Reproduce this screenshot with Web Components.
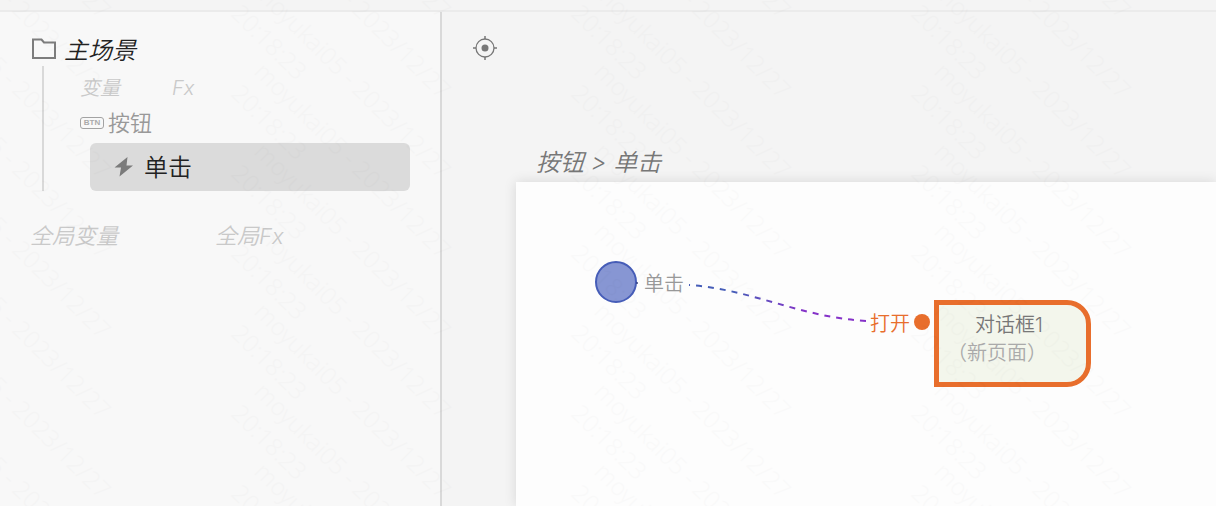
<!DOCTYPE html>
<html lang="zh-CN">
<head>
<meta charset="utf-8">
<title>主场景</title>
<style>
  html, body { height: 100%; }
  body {
    margin: 0;
    overflow: hidden;
    background: #f4f4f4;
    color: #222;
    font-family: Inter, "Noto Sans CJK SC", sans-serif;
  }
</style>
</head>
<body>
<flow-editor>
  <scene-panel slot="side">
    <tree-item slot="item"></tree-item>
  </scene-panel>
  <flow-canvas slot="main" heading="按钮 &gt; 单击"></flow-canvas>
</flow-editor>

<script>
const define = (name, html, setup) => customElements.define(name, class extends HTMLElement {
  constructor() {
    super();
    const template = document.createElement('template');
    template.innerHTML = html;
    this.attachShadow({ mode: 'open' }).append(template.content.cloneNode(true));
  }
  connectedCallback() { if (setup) setup(this, this.shadowRoot); }
});

const FONT = 'Inter, "Noto Sans CJK SC", sans-serif';
const BUTTON = `button { margin: 0; padding: 0; border: 0; background: none; color: inherit; font: inherit; text-align: left; white-space: nowrap; cursor: pointer; }`;

/* Repeating diagonal user / time stamp laid over the whole editor */
define('user-watermark', `
<style>
  :host { position: absolute; inset: 0; z-index: 1; overflow: hidden; pointer-events: none; }
  svg { display: block; width: 100%; height: 100%; opacity: .01; }
  text { font: 300 24px "Noto Sans", sans-serif; fill: #000; }
</style>
<svg aria-hidden="true"></svg>`, (host, root) => {
  const svg = root.querySelector('svg');
  const stamp = (x, y, value, reach) => {
    if (x + reach < 0 || y + reach < 0) return;
    const node = document.createElementNS('http://www.w3.org/2000/svg', 'text');
    node.setAttribute('transform', 'translate(' + x + ' ' + y + ') rotate(45)');
    node.textContent = value;
    svg.append(node);
  };
  for (let x = -87; x < innerWidth; x += 340) {
    for (let y = -167; y < innerHeight; y += 80) {
      stamp(x, y, 'moyukai05 - 2023/12/27', 200);
      stamp(x - 23, y + 22, '20:18:23', 70);
    }
  }
});

define('flow-editor', `
<style>
  :host { position: relative; display: flex; flex-direction: column; height: 100vh; overflow: hidden; }
  header { flex: none; height: 10px; border-bottom: 2px solid #ebebeb; background: #f4f4f4; }
  .body { flex: 1; min-height: 0; display: grid; grid-template-columns: 440px minmax(0, 1fr); }
  aside { border-right: 2px solid #d9d9d9; background: #f8f8f8; width: 100%; }
  main { display: flex; min-width: 0; padding-left: 2px; background: #f4f4f4; background-clip: content-box; }
</style>
<header></header>
<div class="body">
  <aside><slot name="side"></slot></aside>
  <main><slot name="main"></slot></main>
</div>
<user-watermark></user-watermark>`);

define('tree-item', `
<style>
  :host { display: block; }
  ${BUTTON}
  button { display: flex; align-items: center; gap: 11px; box-sizing: border-box; width: 100%; height: 48px; padding-left: 24px; border-radius: 6px; background: #dbdbdb; font-size: 24px; line-height: 32px; color: #222; }
  svg { display: block; flex: none; }
  span { padding-top: 2px; }
</style>
<button type="button" aria-current="true">
  <svg width="19" height="20" viewBox="0 0 19 20" aria-hidden="true"><path d="M13.500 0 .5 10.500H7L5.500 19.500 19 8.500H12.500Z" fill="#7b7b7b"/></svg>
  <span>单击</span>
</button>`);

define('scene-panel', `
<style>
  :host { display: block; padding: 20px 30px 0; font-family: ${FONT}; font-weight: 350; }
  ${BUTTON}
  svg { display: block; flex: none; }
  .scene { display: flex; align-items: center; gap: 6px; height: 34px; font-size: 24px; line-height: 32px; font-style: italic; color: #222; }
  .scene span { padding-top: 4px; }
  .tree { margin-left: 12px; padding-left: 36px; border-left: 2px solid #d9d9d9; display: grid; grid-template-rows: 42px 35px 48px; }
  .vars { display: grid; grid-template-columns: 92px auto; justify-content: start; align-items: center; padding-top: 2px; font-size: 20px; line-height: 28px; font-style: italic; color: #c9c9c9; }
  .widget { display: flex; align-items: center; gap: 4px; height: 30px; font-size: 22px; line-height: 28px; color: #999; }
  .tag { box-sizing: border-box; width: 24px; height: 12px; border: 1px solid #a3a3a3; border-radius: 3px; font: bold 8px/10px "Liberation Sans", sans-serif; text-align: center; color: #aaa; }
  ::slotted(tree-item) { margin-left: 10px; }
  .globals { display: grid; grid-template-columns: 185px auto; justify-content: start; margin-top: 29px; font-size: 22px; line-height: 32px; font-style: italic; color: #c9c9c9; }
</style>
<button class="scene" type="button">
  <svg width="28" height="24" viewBox="0 0 28 24" aria-hidden="true"><path d="M3 2.500H11.500L14 5.500H25V21H3Z" fill="none" stroke="#7d7d7d" stroke-width="2"/></svg>
  <span>主场景</span>
</button>
<div class="tree">
  <div class="vars"><button type="button">变量</button><button type="button">Fx</button></div>
  <button class="widget" type="button"><span class="tag">BTN</span><span>按钮</span></button>
  <slot name="item"></slot>
</div>
<div class="globals"><button type="button">全局变量</button><button type="button">全局Fx</button></div>`);

define('flow-node', `
<style>
  :host { display: flex; flex-direction: column; box-sizing: border-box; width: 157px; height: 87px; padding: 6px 0 0 8px; border: 5px solid #e86e2c; border-radius: 0 24px 24px 0; background: #f3f6ec; font-size: 20px; line-height: 28px; color: #777; }
  .name { padding-left: 28px; }
  .kind { color: #aaa; }
</style>
<span class="name"><slot></slot></span>
<span class="kind"><slot name="kind"></slot></span>`);

define('flow-canvas', `
<style>
  :host { flex: 1; display: flex; flex-direction: column; min-width: 0; font-family: ${FONT}; font-weight: 350; }
  ${BUTTON}
  .tools { padding: 24px 0 0 31px; }
  .tools button, .tools svg { display: block; }
  h1 { margin: 0; padding: 87px 0 3px 94px; font-size: 24px; line-height: 32px; font-weight: 350; font-style: italic; color: #777; }
  .paper { position: relative; flex: 1; margin-left: 74px; background: #fdfdfd; box-shadow: 0 0 12px rgba(0, 0, 0, .12); font-size: 20px; line-height: 28px; }
  .paper > * { position: absolute; white-space: nowrap; }
  .wires { left: 0; top: 0; }
  .event { left: 128px; top: 88px; color: #999; }
  .action { left: 354px; top: 128px; color: #e86e2c; }
  flow-node { left: 418px; top: 118px; }
</style>
<div class="tools">
  <button type="button" aria-label="定位">
    <svg width="24" height="24" viewBox="0 0 24 24" fill="none" stroke="#777" aria-hidden="true">
      <circle cx="12" cy="12" r="9" stroke-width="1.300"/><circle cx="12" cy="12" r="3.500" fill="#777" stroke="none"/>
      <path d="M12 0V3M12 21V24M0 12H3M21 12H24" stroke-width="1.500"/>
    </svg>
  </button>
</div>
<h1></h1>
<section class="paper">
  <svg class="wires" width="580" height="220" viewBox="0 0 580 220" aria-hidden="true">
    <defs><linearGradient id="wire" gradientUnits="userSpaceOnUse" x1="172" y1="0" x2="352" y2="0">
      <stop offset=".25" stop-color="#465db8"/><stop offset=".65" stop-color="#8532c8"/>
    </linearGradient></defs>
    <circle cx="100" cy="100" r="20" fill="#8796d3" stroke="#465db8" stroke-width="2"/>
    <circle cx="121" cy="101" r="1" fill="#333f80"/>
    <path d="M173 103C235 107 286 136 352 139" fill="none" stroke="url(#wire)" stroke-width="2" stroke-dasharray="6 6" stroke-dashoffset="5"/>
    <circle cx="406" cy="140" r="8" fill="#e86e2c"/>
  </svg>
  <span class="event">单击</span>
  <span class="action">打开</span>
  <flow-node>对话框1<span slot="kind">（新页面）</span></flow-node>
</section>`, (host, root) => {
  root.querySelector('h1').textContent = host.getAttribute('heading');
});
</script>
</body>
</html>
